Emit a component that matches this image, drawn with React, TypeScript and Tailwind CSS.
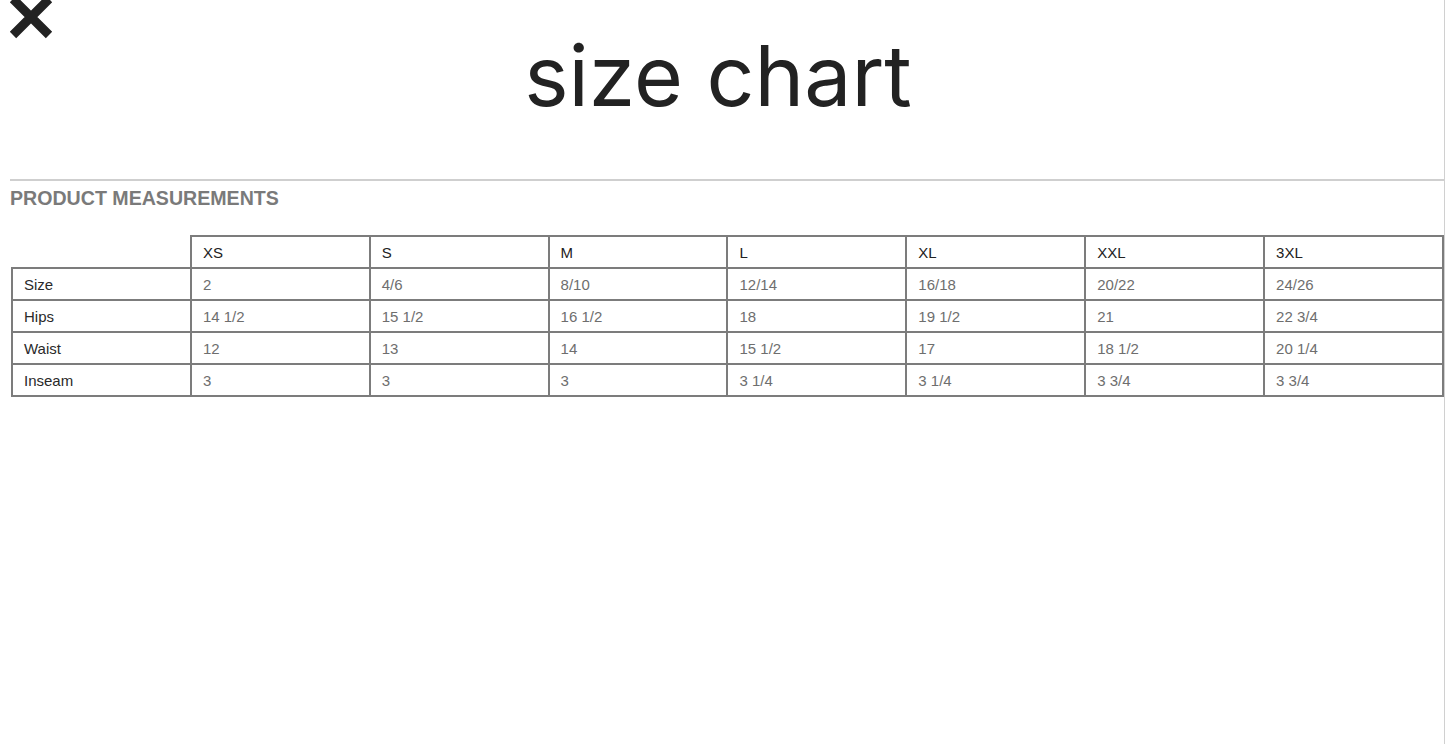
const heads = ["XS", "S", "M", "L", "XL", "XXL", "3XL"];

const rows: { label: string; values: string[] }[] = [
  { label: "Size", values: ["2", "4/6", "8/10", "12/14", "16/18", "20/22", "24/26"] },
  { label: "Hips", values: ["14 1/2", "15 1/2", "16 1/2", "18", "19 1/2", "21", "22 3/4"] },
  { label: "Waist", values: ["12", "13", "14", "15 1/2", "17", "18 1/2", "20 1/4"] },
  { label: "Inseam", values: ["3", "3", "3", "3 1/4", "3 1/4", "3 3/4", "3 3/4"] },
];

const CloseIcon = () => (
  <svg width="56" height="40" viewBox="0 0 56 40" className="block">
    <path d="M13 -1 L49 35 M49 -1 L13 35" stroke="#222" strokeWidth="9" strokeLinecap="butt" fill="none" />
  </svg>
);

export default function App() {
  return (
    <div className="relative h-[744px] w-[1445px] overflow-hidden bg-white font-['Liberation_Sans',Arial,sans-serif]">
      <div className="absolute left-0 top-0">
        <CloseIcon />
      </div>

      <div className="border-r border-[#d0d0d0] h-full">
        <h1 className="pt-[26px] pr-[8px] text-center font-['Inter',sans-serif] text-[84px] font-normal leading-[100px] text-[#222]">
          size chart
        </h1>

        <div className="mt-[53px] ml-[10px] h-[2px] bg-[#cfcfcf]" />

        <h2 className="ml-[10px] mt-[6px] text-[19.6px] font-bold leading-[22px] text-[#7a7a7a]">
          PRODUCT MEASUREMENTS
        </h2>

        <table className="ml-[11px] mt-[26px] border-collapse text-[15px] leading-[18px]">
          <thead>
            <tr>
              <th className="h-[32px] w-[179px] p-0" />
              {heads.map((h) => (
                <th
                  key={h}
                  className="h-[32px] w-[179px] border-2 border-[#7c7c7c] px-[11px] pt-[2px] text-left font-normal text-[#222]"
                >
                  {h}
                </th>
              ))}
            </tr>
          </thead>
          <tbody>
            {rows.map((r) => (
              <tr key={r.label}>
                <td className="h-[32px] border-2 border-[#7c7c7c] px-[11px] pt-[2px] text-[#2a2a2a]">{r.label}</td>
                {r.values.map((v, i) => (
                  <td key={i} className="h-[32px] border-2 border-[#7c7c7c] px-[11px] pt-[2px] text-[#6e6e6e]">
                    {v}
                  </td>
                ))}
              </tr>
            ))}
          </tbody>
        </table>
      </div>
    </div>
  );
}
